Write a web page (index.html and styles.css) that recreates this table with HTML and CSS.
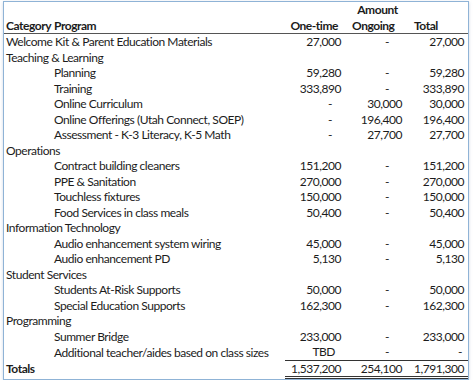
FILE: index.html
```html
<!DOCTYPE html>
<html lang="en">
<head>
  <meta charset="UTF-8">
  <meta name="viewport" content="width=device-width, initial-scale=1.0">
  <title>Reopening Budget</title>
  <link rel="stylesheet" href="styles.css">
</head>
<body>
  <div class="sheet">
    <table class="budget">
      <colgroup>
        <col class="col-label">
        <col class="col-num">
        <col class="col-num2">
        <col class="col-num3">
      </colgroup>
      <thead>
        <tr>
          <th></th>
          <th></th>
          <th class="amount">Amount</th>
          <th></th>
        </tr>
        <tr class="head-row">
          <th class="label"><span class="cat-head">Category</span>Program</th>
          <th class="h-one">One-time</th>
          <th class="h-ongoing">Ongoing</th>
          <th class="h-total">Total</th>
        </tr>
      </thead>
      <tbody>
        <tr><td class="label">Welcome Kit &amp; Parent Education Materials</td><td class="num">27,000</td><td class="num dash">-</td><td class="num">27,000</td></tr>
        <tr><td class="label" colspan="4">Teaching &amp; Learning</td></tr>
        <tr><td class="label sub">Planning</td><td class="num">59,280</td><td class="num dash">-</td><td class="num">59,280</td></tr>
        <tr><td class="label sub">Training</td><td class="num">333,890</td><td class="num dash">-</td><td class="num">333,890</td></tr>
        <tr><td class="label sub">Online Curriculum</td><td class="num dash">-</td><td class="num">30,000</td><td class="num">30,000</td></tr>
        <tr><td class="label sub">Online Offerings (Utah Connect, SOEP)</td><td class="num dash">-</td><td class="num">196,400</td><td class="num">196,400</td></tr>
        <tr><td class="label sub">Assessment - K-3 Literacy, K-5 Math</td><td class="num dash">-</td><td class="num">27,700</td><td class="num">27,700</td></tr>
        <tr><td class="label" colspan="4">Operations</td></tr>
        <tr><td class="label sub">Contract building cleaners</td><td class="num">151,200</td><td class="num dash">-</td><td class="num">151,200</td></tr>
        <tr><td class="label sub">PPE &amp; Sanitation</td><td class="num">270,000</td><td class="num dash">-</td><td class="num">270,000</td></tr>
        <tr><td class="label sub">Touchless fixtures</td><td class="num">150,000</td><td class="num dash">-</td><td class="num">150,000</td></tr>
        <tr><td class="label sub">Food Services in class meals</td><td class="num">50,400</td><td class="num dash">-</td><td class="num">50,400</td></tr>
        <tr><td class="label" colspan="4">Information Technology</td></tr>
        <tr><td class="label sub">Audio enhancement system wiring</td><td class="num">45,000</td><td class="num dash">-</td><td class="num">45,000</td></tr>
        <tr><td class="label sub">Audio enhancement PD</td><td class="num">5,130</td><td class="num dash">-</td><td class="num">5,130</td></tr>
        <tr><td class="label" colspan="4">Student Services</td></tr>
        <tr><td class="label sub">Students At-Risk Supports</td><td class="num">50,000</td><td class="num dash">-</td><td class="num">50,000</td></tr>
        <tr><td class="label sub">Special Education Supports</td><td class="num">162,300</td><td class="num dash">-</td><td class="num">162,300</td></tr>
        <tr><td class="label" colspan="4">Programming</td></tr>
        <tr><td class="label sub">Summer Bridge</td><td class="num">233,000</td><td class="num dash">-</td><td class="num">233,000</td></tr>
        <tr><td class="label sub">Additional teacher/aides based on class sizes</td><td class="num tbd">TBD</td><td class="num dash">-</td><td class="num dash">-</td></tr>
      </tbody>
      <tfoot>
        <tr class="totals">
          <td class="label">Totals</td>
          <td class="num">1,537,200</td>
          <td class="num">254,100</td>
          <td class="num">1,791,300</td>
        </tr>
      </tfoot>
    </table>
  </div>
</body>
</html>
```

FILE: styles.css
```css
body {
  margin: 0;
  padding: 0;
  background-color: #fff;
  font-family: Lato, "Open Sans", sans-serif;
  font-size: 12px;
  letter-spacing: -0.45px;
  color: #1c1c1c;
}

.sheet {
  width: 464px;
  margin: 1px 0 0 3px;
  border: 1px solid #8fb3d6;
  box-shadow: 0 1px 3px rgba(120, 150, 180, 0.35);
}

.budget {
  width: 100%;
  border-collapse: collapse;
  table-layout: fixed;
}

.col-label {
  width: 281px;
}

.col-num {
  width: 58px;
}

.col-num2 {
  width: 61px;
}

.col-num3 {
  width: 64px;
}

th,
td {
  height: 15.5px;
  padding: 0;
  line-height: 15px;
  white-space: nowrap;
  font-weight: normal;
}

th {
  font-weight: bold;
}

.head-row th {
  border-bottom: 1px solid #555;
}

.amount {
  text-align: center;
  padding-left: 8px;
}

.label {
  text-align: left;
  padding-left: 2px;
}

.cat-head {
  display: inline-block;
  width: 48px;
}

.sub {
  padding-left: 50px;
}

.h-one {
  text-align: right;
  padding-right: 5px;
}

.h-ongoing {
  text-align: left;
  padding-left: 9px;
}

.h-total {
  text-align: left;
  padding-left: 10px;
}

.num {
  text-align: right;
  padding-right: 2px;
}

td.num:last-child {
  padding-right: 4px;
}

.dash {
  padding-right: 11px;
}

td:nth-child(3).dash {
  padding-right: 15px;
}

td.dash:last-child {
  padding-right: 6px;
}

.tbd {
  padding-right: 8px;
}

.totals td {
  font-weight: bold;
}

.totals td.num {
  font-weight: normal;
  border-top: 1px solid #333;
  border-bottom: 3px double #333;
}
```
